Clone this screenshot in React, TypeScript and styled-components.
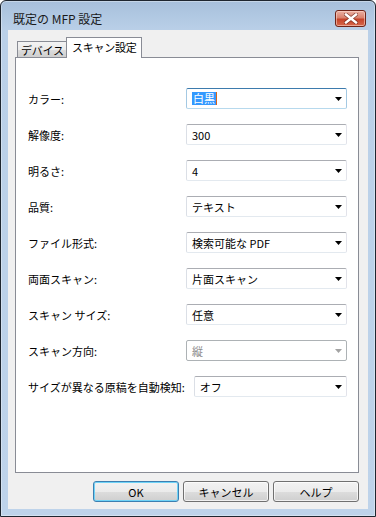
import React from 'react';
import styled, { createGlobalStyle } from 'styled-components';

const GlobalStyle = createGlobalStyle`
  html, body {
    margin: 0;
    padding: 0;
    background: #ffffff;
  }
  * {
    box-sizing: border-box;
  }
`;

const Window = styled.div`
  width: 376px;
  height: 517px;
  display: flex;
  flex-direction: column;
  border: 1px solid #1e2630;
  border-radius: 6px 6px 0 0;
  background: linear-gradient(to bottom, #a7c0dc 0px, #bad0e8 30px, #bed3ea 100%);
  box-shadow: inset 0 0 0 1px rgba(255, 255, 255, 0.35);
  font-family: "Noto Sans CJK JP", "Liberation Sans", sans-serif;
  color: #000;
  overflow: hidden;
`;

const TitleBar = styled.div`
  height: 29px;
  flex: 0 0 auto;
  display: flex;
  align-items: center;
  justify-content: space-between;
  padding: 9px 9px 3px 12px;
`;

const Title = styled.div`
  font-size: 12px;
  line-height: 17px;
  color: #1a1a1a;
`;

const CloseButton = styled.div`
  width: 31px;
  height: 17px;
  border: 1px solid #6e2418;
  border-radius: 3px;
  background: linear-gradient(to bottom, #eab0a2 0%, #d9826e 45%, #c5442a 55%, #d7684c 100%);
  box-shadow: inset 0 0 0 1px rgba(255, 220, 210, 0.55);
  display: flex;
  align-items: center;
  justify-content: center;
`;

const Client = styled.div`
  flex: 1;
  margin: 0 7px 7px 7px;
  background: #f0f0f0;
  display: flex;
  flex-direction: column;
  padding: 7px 9px 7px 7px;
`;

const TabBar = styled.div`
  display: flex;
  align-items: flex-end;
  padding-left: 2px;
  height: 20px;
  position: relative;
  z-index: 1;
`;

const Tab = styled.div<{ $active?: boolean }>`
  font-size: 11px;
  line-height: 15px;
  border: 1px solid #898c95;
  border-bottom: none;
  white-space: nowrap;
  letter-spacing: -0.2px;
  ${p =>
    p.$active
      ? `
    height: 21px;
    margin-left: -1px;
    margin-bottom: -1px;
    padding: 2px 4px 0 5px;
    background: #ffffff;
    position: relative;
    z-index: 2;
  `
      : `
    height: 16px;
    padding: 1px 2px 0 3px;
    background: linear-gradient(to bottom, #f3f3f3 0%, #ebebeb 50%, #dddddd 51%, #cfcfcf 100%);
  `}
`;

const Panel = styled.div`
  flex: 1;
  background: #ffffff;
  border: 1px solid #898c95;
  padding: 30px 11px 0 12px;
  display: flex;
  flex-direction: column;
  gap: 15px;
`;

const Row = styled.div`
  display: flex;
  align-items: center;
  height: 21px;
`;

const Label = styled.div`
  flex: 0 0 auto;
  min-width: 158px;
  padding-right: 9px;
  font-size: 11px;
  white-space: nowrap;
`;

const Combo = styled.div<{ $focused?: boolean; $disabled?: boolean }>`
  flex: 1;
  height: 21px;
  display: flex;
  align-items: center;
  justify-content: space-between;
  padding: 0 4px 0 5px;
  background: #ffffff;
  border: 1px solid;
  border-radius: 2px;
  font-size: 11px;
  color: ${p => (p.$disabled ? '#8a8a8a' : '#000')};
  border-color: ${p =>
    p.$focused
      ? '#3d7bad #a4c9e3 #b7d9ed #a4c9e3'
      : p.$disabled
      ? '#adb2b5'
      : '#abadb3 #e2e3ea #e3e9ef #dbdfe6'};
`;

const Selected = styled.span`
  background: #3399ff;
  color: #ffffff;
  padding: 0 1px;
  line-height: 13px;
  border-right: 1px solid #d8641a;
`;

const ButtonBar = styled.div`
  display: flex;
  justify-content: flex-end;
  gap: 4px;
  margin-top: 8px;
`;

const Button = styled.div<{ $default?: boolean }>`
  width: 86px;
  height: 21px;
  display: flex;
  align-items: center;
  justify-content: center;
  font-size: 11px;
  border-radius: 3px;
  border: 1px solid ${p => (p.$default ? '#3c7fb1' : '#707070')};
  background: linear-gradient(to bottom, #f2f2f2 0%, #ebebeb 50%, #dddddd 51%, #cfcfcf 100%);
  box-shadow: inset 0 0 0 1px ${p => (p.$default ? '#6fd3f7' : 'rgba(255,255,255,0.7)')};
`;

const Arrow = ({ disabled }: { disabled?: boolean }) => (
  <svg width="7" height="4" viewBox="0 0 7 4">
    <path d="M0 0 H7 L3.5 4 Z" fill={disabled ? '#a3a3a3' : '#000'} />
  </svg>
);

const CloseGlyph = () => (
  <svg width="14" height="11" viewBox="0 0 14 11">
    <path
      d="M2 1.5 L12 9.5 M12 1.5 L2 9.5"
      stroke="#5a1a10"
      strokeWidth="4"
      strokeLinecap="square"
      opacity="0.6"
    />
    <path d="M2 1.5 L12 9.5 M12 1.5 L2 9.5" stroke="#ffffff" strokeWidth="2.4" strokeLinecap="square" />
  </svg>
);

interface Setting {
  label: string;
  value: string;
  focused?: boolean;
  disabled?: boolean;
}

const settings: Setting[] = [
  { label: 'カラー:', value: '白黒', focused: true },
  { label: '解像度:', value: '300' },
  { label: '明るさ:', value: '4' },
  { label: '品質:', value: 'テキスト' },
  { label: 'ファイル形式:', value: '検索可能な PDF' },
  { label: '両面スキャン:', value: '片面スキャン' },
  { label: 'スキャン サイズ:', value: '任意' },
  { label: 'スキャン方向:', value: '縦', disabled: true },
  { label: 'サイズが異なる原稿を自動検知:', value: 'オフ' },
];

const App: React.FC = () => {
  return (
    <>
      <GlobalStyle />
      <Window>
        <TitleBar>
          <Title>既定の MFP 設定</Title>
          <CloseButton>
            <CloseGlyph />
          </CloseButton>
        </TitleBar>
        <Client>
          <TabBar>
            <Tab>デバイス</Tab>
            <Tab $active>スキャン設定</Tab>
          </TabBar>
          <Panel>
            {settings.map(s => (
              <Row key={s.label}>
                <Label>{s.label}</Label>
                <Combo $focused={s.focused} $disabled={s.disabled}>
                  {s.focused ? <Selected>{s.value}</Selected> : <span>{s.value}</span>}
                  <Arrow disabled={s.disabled} />
                </Combo>
              </Row>
            ))}
          </Panel>
          <ButtonBar>
            <Button $default>OK</Button>
            <Button>キャンセル</Button>
            <Button>ヘルプ</Button>
          </ButtonBar>
        </Client>
      </Window>
    </>
  );
};

export default App;
